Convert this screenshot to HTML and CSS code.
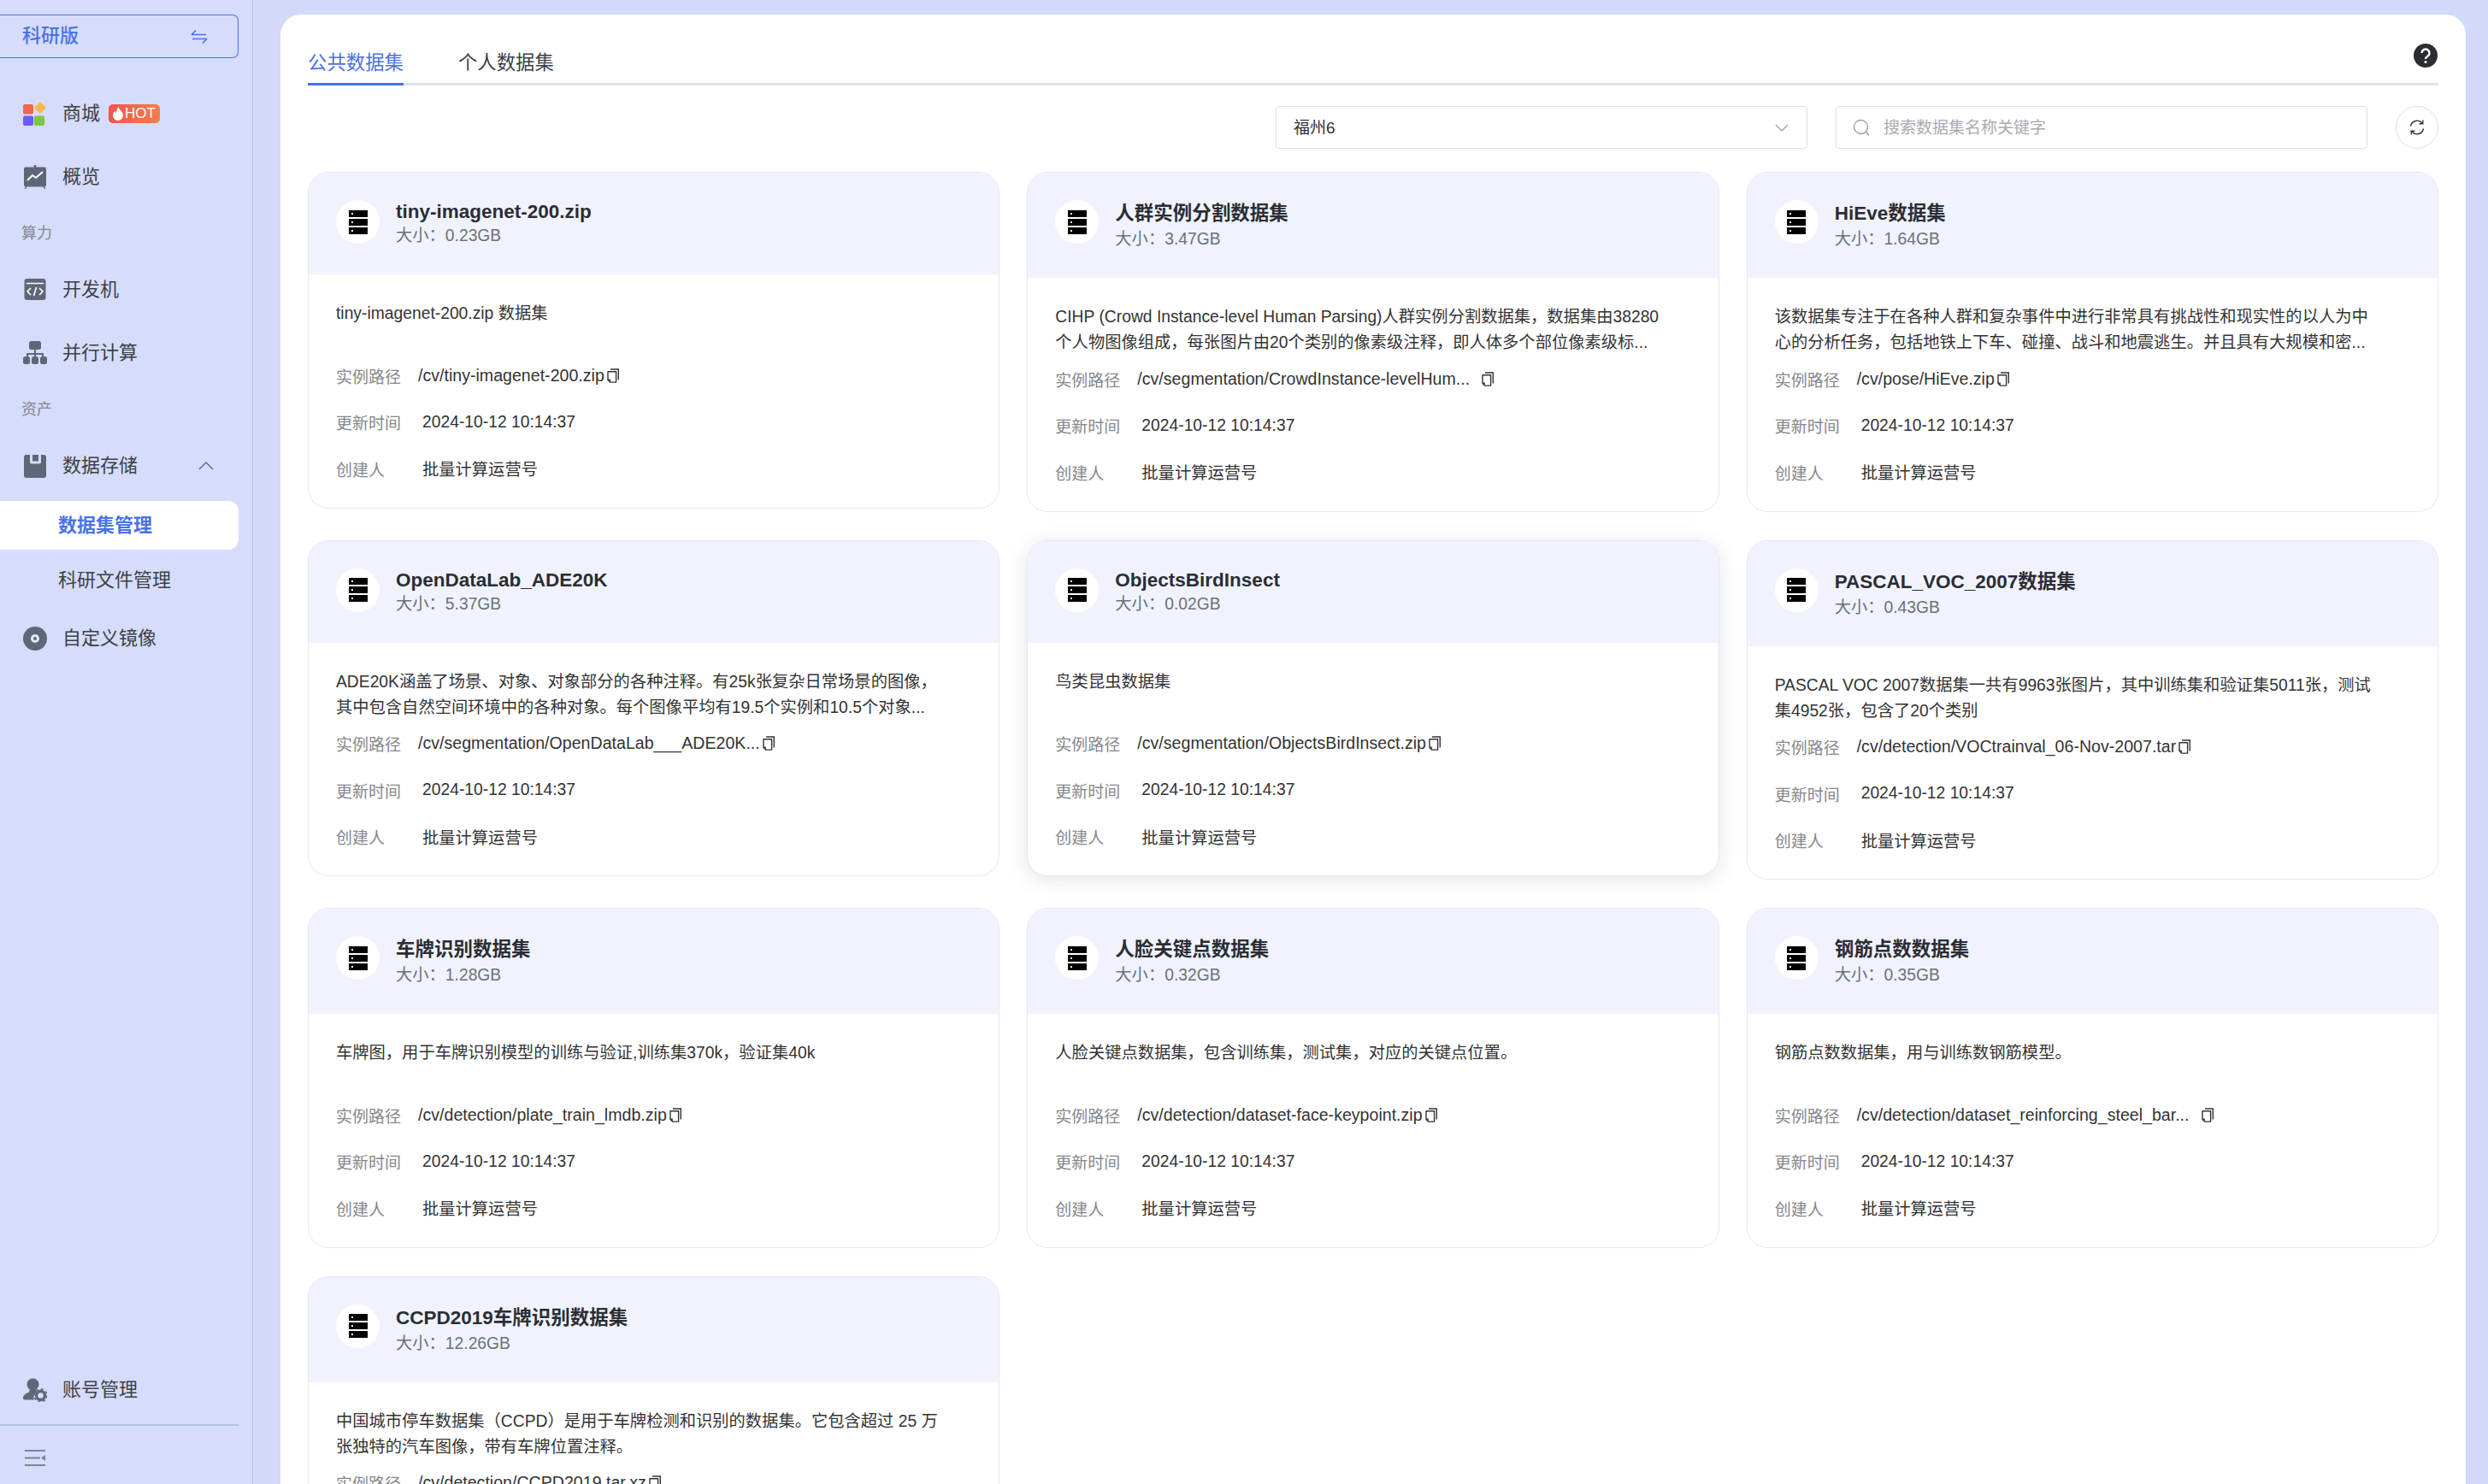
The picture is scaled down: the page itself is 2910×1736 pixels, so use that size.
FILE: index.html
```html
<!DOCTYPE html>
<html lang="zh-CN">
<head>
<meta charset="utf-8">
<title>数据集管理</title>
<link rel="stylesheet" href="styles.css">
</head>
<body>
<svg class="defs" width="0" height="0" aria-hidden="true">
  <symbol id="i-server" viewBox="0 0 22 28">
    <path fill-rule="evenodd" d="M0 0h22v8H0zM3 3v2h2V3zM0 10h22v8H0zM3 13v2h2v-2zM0 20h22v8H0zM3 23v2h2v-2z"/>
  </symbol>
  <symbol id="i-copy" viewBox="0 0 14 17">
    <path d="M4 1h9.300v12.500" fill="none" stroke="#333" stroke-width="1.400"/>
    <path d="M1 3.700h9.600v12.400H3.600L1 13.500z" fill="#fff" stroke="#333" stroke-width="1.400" stroke-linejoin="round"/>
    <path d="M1 12.600h2.800v3.200z" fill="#333"/>
  </symbol>
</svg>
<div class="app">
  <aside class="sidebar">
    <div class="edition"><span class="edition-name">科研版</span>
      <svg class="edition-icon" viewBox="0 0 20 18" width="20" height="18"><path d="M1 6.500h17M1 6.500L6 1.500M19 11.500H2M19 11.500l-5 5" fill="none" stroke="#4a72e8" stroke-width="1.600"/></svg>
    </div>
    <nav class="nav">
      <a class="nav-item">
        <svg class="nav-icon" viewBox="0 0 28 28" width="28" height="28"><rect x="0" y="3" width="12" height="11.500" rx="2" fill="#f2654f"/><rect x="15" y="2" width="10" height="10" rx="1.500" transform="rotate(45 20 7)" fill="#f7b948"/><rect x="0" y="16.500" width="12" height="11.500" rx="2" fill="#6a5cf6"/><rect x="13" y="16.500" width="12" height="11.500" rx="2" fill="#7ac83e"/></svg>
        <span>商城</span>
        <span class="hot"><svg viewBox="0 0 12 16" width="12" height="16"><path d="M6.500 0c.5 3 5.500 5.500 5.500 10a6 6 0 0 1-12 0c0-2.500 1.500-4 2.500-5 .2 1.200.7 2 1.500 2.500C4 5 5 2 6.500 0z" fill="#fff"/></svg>HOT</span>
      </a>
      <a class="nav-item">
        <svg class="nav-icon" viewBox="0 0 28 28" width="28" height="28"><path d="M3 2.500h22a2 2 0 0 1 2 2v19a2 2 0 0 1-2 2H3a2 2 0 0 1-2-2v-19a2 2 0 0 1 2-2z" fill="#5f6678"/><path d="M13.500 0h1v3h-1zM4 25l-1.500 3M24 25l1.500 3" stroke="#5f6678" stroke-width="1.500"/><path d="M5 18l6-6 4 3 8-7" fill="none" stroke="#fff" stroke-width="2"/></svg>
        <span>概览</span>
      </a>
      <div class="nav-group">算力</div>
      <a class="nav-item">
        <svg class="nav-icon" viewBox="0 0 28 28" width="28" height="28"><rect x="1.500" y="1" width="25" height="25" rx="3" fill="#5f6678"/><path d="M4 6.500h20" stroke="#fff" stroke-width="1.500"/><path d="M9 12l-4 4 4 4M19 12l4 4-4 4M15.500 11l-3 10" fill="none" stroke="#fff" stroke-width="1.700"/></svg>
        <span>开发机</span>
      </a>
      <a class="nav-item">
        <svg class="nav-icon" viewBox="0 0 28 28" width="28" height="28"><rect x="7" y="0" width="14" height="10" rx="2.500" fill="#5f6678"/><path d="M13 9h2v5h9v4h-2v-2h-7v2h-2v-2H6v2H4v-4h9z" fill="#5f6678"/><rect x="0" y="18" width="8" height="9" rx="2.500" fill="#5f6678"/><rect x="10" y="18" width="8" height="9" rx="2.500" fill="#5f6678"/><rect x="20" y="18" width="8" height="9" rx="2.500" fill="#5f6678"/></svg>
        <span>并行计算</span>
      </a>
      <div class="nav-group">资产</div>
      <a class="nav-item">
        <svg class="nav-icon" viewBox="0 0 28 28" width="28" height="28"><path fill-rule="evenodd" d="M4 1h4v8.500a2 2 0 0 0 2 2h9a2 2 0 0 0 2-2V1h3a3 3 0 0 1 3 3v21a3 3 0 0 1-3 3H4a3 3 0 0 1-3-3V4a3 3 0 0 1 3-3zM11 1h7v7.500h-7z" fill="#5f6678"/></svg>
        <span>数据存储</span>
        <svg class="nav-caret" viewBox="0 0 18 10" width="18" height="10"><path d="M1 9l8-8 8 8" fill="none" stroke="#666" stroke-width="1.300"/></svg>
      </a>
      <div class="subnav">
        <a class="sub-item sub-item--active">数据集管理</a>
        <a class="sub-item">科研文件管理</a>
      </div>
      <a class="nav-item">
        <svg class="nav-icon" viewBox="0 0 28 28" width="28" height="28"><circle cx="14" cy="14" r="14" fill="#5f6678"/><circle cx="14" cy="14" r="5" fill="#e3e6f7"/><circle cx="14" cy="14" r="2" fill="#5f6678"/></svg>
        <span>自定义镜像</span>
      </a>
    </nav>
    <div class="sidebar-foot">
      <a class="nav-item">
        <svg class="nav-icon" viewBox="0 0 28 28" width="28" height="28"><circle cx="11.500" cy="7.500" r="7" fill="#5f6678"/><path d="M8 13h7l1 3a8 8 0 0 0-3 9.500H2a2 2 0 0 1-2-2c0-4 4-5.500 7-7z" fill="#5f6678"/><circle cx="20.500" cy="20.500" r="5" fill="none" stroke="#5f6678" stroke-width="3.400"/><circle cx="20.500" cy="20.500" r="7.500" fill="none" stroke="#5f6678" stroke-width="1.500" stroke-dasharray="3 2.900"/></svg>
        <span>账号管理</span>
      </a>
      <div class="foot-rule"></div>
      <div class="collapse">
        <svg viewBox="0 0 25 19" width="25" height="19"><path d="M0 1h24M0 9.500h18M0 18h24" stroke="#7c8397" stroke-width="2.200"/><path d="M24 6v7l-5-3.500z" fill="#7c8397"/></svg>
      </div>
    </div>
  </aside>

  <main class="main">
    <div class="tabs">
      <a class="tab tab--active">公共数据集</a>
      <a class="tab">个人数据集</a>
      <svg class="help" viewBox="0 0 28 28" width="28" height="28"><circle cx="14" cy="14" r="14" fill="#2b2d33"/><path d="M9.500 11a4.500 4.500 0 1 1 6.800 3.900c-1.500.9-2.300 1.500-2.300 3.100" fill="none" stroke="#fff" stroke-width="2.400"/><circle cx="14" cy="21.500" r="1.600" fill="#fff"/></svg>
    </div>

    <div class="toolbar">
      <div class="field field--select"><span>福州6</span>
        <svg class="chevron" viewBox="0 0 16 9" width="16" height="9"><path d="M1 1l7 7 7-7" fill="none" stroke="#999" stroke-width="1.200"/></svg>
      </div>
      <div class="field field--search">
        <svg viewBox="0 0 20 20" width="20" height="20"><circle cx="9.500" cy="9.500" r="8" fill="none" stroke="#999" stroke-width="1.300"/><path d="M15 15l4 4" stroke="#999" stroke-width="1.300"/></svg>
        <span class="placeholder">搜索数据集名称关键字</span>
      </div>
      <button class="refresh" type="button" aria-label="刷新">
        <svg viewBox="0 0 20 20" width="20" height="20"><path d="M2.500 8.500A7.700 7.700 0 0 1 16 5M17.500 11.500A7.700 7.700 0 0 1 4 15" fill="none" stroke="#333" stroke-width="1.400"/><path d="M16.800 1.500v4.300h-4.300M3.200 18.500v-4.300h4.300" fill="none" stroke="#333" stroke-width="1.400"/></svg>
      </button>
    </div>

    <div class="grid">
      <article class="card card--latin">
        <header class="card-head">
          <span class="avatar"><svg width="22" height="28"><use href="#i-server"/></svg></span>
          <div class="card-title"><h3>tiny-imagenet-200.zip</h3><p>大小：0.23GB</p></div>
        </header>
        <div class="card-body">
          <p class="desc">tiny-imagenet-200.zip 数据集</p>
          <div class="row"><span class="label">实例路径</span><span class="path"><span class="path-text">/cv/tiny-imagenet-200.zip</span><svg class="copy" width="14" height="17"><use href="#i-copy"/></svg></span></div>
          <div class="row"><span class="label">更新时间</span><span class="value">2024-10-12 10:14:37</span></div>
          <div class="row"><span class="label">创建人</span><span class="value">批量计算运营号</span></div>
        </div>
      </article>

      <article class="card">
        <header class="card-head">
          <span class="avatar"><svg width="22" height="28"><use href="#i-server"/></svg></span>
          <div class="card-title"><h3>人群实例分割数据集</h3><p>大小：3.47GB</p></div>
        </header>
        <div class="card-body">
          <p class="desc">CIHP (Crowd Instance-level Human Parsing)人群实例分割数据集，数据集由38280<br>个人物图像组成，每张图片由20个类别的像素级注释，即人体多个部位像素级标...</p>
          <div class="row"><span class="label">实例路径</span><span class="path"><span class="path-text path-text--cut">/cv/segmentation/CrowdInstance-levelHum...</span><svg class="copy" width="14" height="17"><use href="#i-copy"/></svg></span></div>
          <div class="row"><span class="label">更新时间</span><span class="value">2024-10-12 10:14:37</span></div>
          <div class="row"><span class="label">创建人</span><span class="value">批量计算运营号</span></div>
        </div>
      </article>

      <article class="card">
        <header class="card-head">
          <span class="avatar"><svg width="22" height="28"><use href="#i-server"/></svg></span>
          <div class="card-title"><h3>HiEve数据集</h3><p>大小：1.64GB</p></div>
        </header>
        <div class="card-body">
          <p class="desc">该数据集专注于在各种人群和复杂事件中进行非常具有挑战性和现实性的以人为中<br>心的分析任务，包括地铁上下车、碰撞、战斗和地震逃生。并且具有大规模和密...</p>
          <div class="row"><span class="label">实例路径</span><span class="path"><span class="path-text">/cv/pose/HiEve.zip</span><svg class="copy" width="14" height="17"><use href="#i-copy"/></svg></span></div>
          <div class="row"><span class="label">更新时间</span><span class="value">2024-10-12 10:14:37</span></div>
          <div class="row"><span class="label">创建人</span><span class="value">批量计算运营号</span></div>
        </div>
      </article>

      <article class="card card--latin">
        <header class="card-head">
          <span class="avatar"><svg width="22" height="28"><use href="#i-server"/></svg></span>
          <div class="card-title"><h3>OpenDataLab_ADE20K</h3><p>大小：5.37GB</p></div>
        </header>
        <div class="card-body">
          <p class="desc">ADE20K涵盖了场景、对象、对象部分的各种注释。有25k张复杂日常场景的图像，<br>其中包含自然空间环境中的各种对象。每个图像平均有19.5个实例和10.5个对象...</p>
          <div class="row"><span class="label">实例路径</span><span class="path"><span class="path-text path-text--cut">/cv/segmentation/OpenDataLab___ADE20K...</span><svg class="copy" width="14" height="17"><use href="#i-copy"/></svg></span></div>
          <div class="row"><span class="label">更新时间</span><span class="value">2024-10-12 10:14:37</span></div>
          <div class="row"><span class="label">创建人</span><span class="value">批量计算运营号</span></div>
        </div>
      </article>

      <article class="card card--latin card--hover">
        <header class="card-head">
          <span class="avatar"><svg width="22" height="28"><use href="#i-server"/></svg></span>
          <div class="card-title"><h3>ObjectsBirdInsect</h3><p>大小：0.02GB</p></div>
        </header>
        <div class="card-body">
          <p class="desc">鸟类昆虫数据集</p>
          <div class="row"><span class="label">实例路径</span><span class="path"><span class="path-text">/cv/segmentation/ObjectsBirdInsect.zip</span><svg class="copy" width="14" height="17"><use href="#i-copy"/></svg></span></div>
          <div class="row"><span class="label">更新时间</span><span class="value">2024-10-12 10:14:37</span></div>
          <div class="row"><span class="label">创建人</span><span class="value">批量计算运营号</span></div>
        </div>
      </article>

      <article class="card">
        <header class="card-head">
          <span class="avatar"><svg width="22" height="28"><use href="#i-server"/></svg></span>
          <div class="card-title"><h3>PASCAL_VOC_2007数据集</h3><p>大小：0.43GB</p></div>
        </header>
        <div class="card-body">
          <p class="desc">PASCAL VOC 2007数据集一共有9963张图片，其中训练集和验证集5011张，测试<br>集4952张，包含了20个类别</p>
          <div class="row"><span class="label">实例路径</span><span class="path"><span class="path-text">/cv/detection/VOCtrainval_06-Nov-2007.tar</span><svg class="copy" width="14" height="17"><use href="#i-copy"/></svg></span></div>
          <div class="row"><span class="label">更新时间</span><span class="value">2024-10-12 10:14:37</span></div>
          <div class="row"><span class="label">创建人</span><span class="value">批量计算运营号</span></div>
        </div>
      </article>

      <article class="card">
        <header class="card-head">
          <span class="avatar"><svg width="22" height="28"><use href="#i-server"/></svg></span>
          <div class="card-title"><h3>车牌识别数据集</h3><p>大小：1.28GB</p></div>
        </header>
        <div class="card-body">
          <p class="desc">车牌图，用于车牌识别模型的训练与验证,训练集370k，验证集40k</p>
          <div class="row"><span class="label">实例路径</span><span class="path"><span class="path-text">/cv/detection/plate_train_lmdb.zip</span><svg class="copy" width="14" height="17"><use href="#i-copy"/></svg></span></div>
          <div class="row"><span class="label">更新时间</span><span class="value">2024-10-12 10:14:37</span></div>
          <div class="row"><span class="label">创建人</span><span class="value">批量计算运营号</span></div>
        </div>
      </article>

      <article class="card">
        <header class="card-head">
          <span class="avatar"><svg width="22" height="28"><use href="#i-server"/></svg></span>
          <div class="card-title"><h3>人脸关键点数据集</h3><p>大小：0.32GB</p></div>
        </header>
        <div class="card-body">
          <p class="desc">人脸关键点数据集，包含训练集，测试集，对应的关键点位置。</p>
          <div class="row"><span class="label">实例路径</span><span class="path"><span class="path-text">/cv/detection/dataset-face-keypoint.zip</span><svg class="copy" width="14" height="17"><use href="#i-copy"/></svg></span></div>
          <div class="row"><span class="label">更新时间</span><span class="value">2024-10-12 10:14:37</span></div>
          <div class="row"><span class="label">创建人</span><span class="value">批量计算运营号</span></div>
        </div>
      </article>

      <article class="card">
        <header class="card-head">
          <span class="avatar"><svg width="22" height="28"><use href="#i-server"/></svg></span>
          <div class="card-title"><h3>钢筋点数数据集</h3><p>大小：0.35GB</p></div>
        </header>
        <div class="card-body">
          <p class="desc">钢筋点数数据集，用与训练数钢筋模型。</p>
          <div class="row"><span class="label">实例路径</span><span class="path"><span class="path-text path-text--cut">/cv/detection/dataset_reinforcing_steel_bar...</span><svg class="copy" width="14" height="17"><use href="#i-copy"/></svg></span></div>
          <div class="row"><span class="label">更新时间</span><span class="value">2024-10-12 10:14:37</span></div>
          <div class="row"><span class="label">创建人</span><span class="value">批量计算运营号</span></div>
        </div>
      </article>

      <article class="card">
        <header class="card-head">
          <span class="avatar"><svg width="22" height="28"><use href="#i-server"/></svg></span>
          <div class="card-title"><h3>CCPD2019车牌识别数据集</h3><p>大小：12.26GB</p></div>
        </header>
        <div class="card-body">
          <p class="desc">中国城市停车数据集（CCPD）是用于车牌检测和识别的数据集。它包含超过 25 万<br>张独特的汽车图像，带有车牌位置注释。</p>
          <div class="row"><span class="label">实例路径</span><span class="path"><span class="path-text">/cv/detection/CCPD2019.tar.xz</span><svg class="copy" width="14" height="17"><use href="#i-copy"/></svg></span></div>
          <div class="row"><span class="label">更新时间</span><span class="value">2024-10-12 10:14:37</span></div>
          <div class="row"><span class="label">创建人</span><span class="value">批量计算运营号</span></div>
        </div>
      </article>
    </div>
  </main>
</div>
</body>
</html>
```

FILE: styles.css
```css
* { box-sizing: border-box; }
html, body { margin: 0; height: 100%; }
body {
  font-family: "Liberation Sans", "Noto Sans CJK SC", sans-serif;
  color: #333;
  background: #d2d9f9;
  overflow: hidden;
}
.defs { position: absolute; }
.app { display: flex; height: 1736px; overflow: hidden; }

/* Sidebar */
.sidebar {
  flex: 0 0 296px;
  display: flex;
  flex-direction: column;
  padding: 17px 16px 0 0;
  background: #d6dcfb;
  border-right: 1px solid #b9c6e6;
}
.edition {
  display: flex;
  align-items: center;
  justify-content: space-between;
  height: 51px;
  padding: 0 35px 0 26px;
  margin-bottom: 28px;
  border: 1px solid #4a72e8;
  border-left: 0;
  border-radius: 0 7px 7px 0;
  color: #4a72e8;
  font-size: 22px;
  font-weight: 500;
}
.edition-name { line-height: 30px; margin-top: -2px; }
.nav-item {
  display: flex;
  align-items: center;
  height: 74px;
  padding-left: 27px;
  font-size: 22px;
  line-height: 30px;
  color: #3d3f45;
}
.nav-icon { flex: none; margin-right: 18px; }
.nav-caret { margin-left: auto; margin-right: 29px; }
.hot {
  display: inline-flex;
  align-items: center;
  gap: 2px;
  height: 22px;
  margin-left: 10px;
  padding: 0 5px;
  border-radius: 5px;
  background: linear-gradient(90deg, #ee5650, #f08049);
  color: #fff;
  font-size: 17px;
  line-height: 22px;
}
.nav-group {
  height: 58px;
  padding-left: 25px;
  font-size: 18px;
  line-height: 58px;
  color: #85878f;
}
.subnav { display: flex; flex-direction: column; gap: 7px; margin: 4px 0 3px; }
.sub-item {
  height: 57px;
  padding-left: 68px;
  border-radius: 0 12px 12px 0;
  font-size: 22px;
  line-height: 57px;
  color: #3d3f45;
}
.sub-item--active { background: #fff; color: #4a72e8; font-weight: 700; }
.sidebar-foot { margin-top: auto; }
.foot-rule { height: 2px; margin-top: 3px; background: #b4c0e0; }
.collapse { display: flex; align-items: center; height: 68px; padding: 6px 0 0 29px; }

/* Main panel */
.main {
  flex: 1;
  min-width: 0;
  margin: 17px 26px 0 32px;
  padding: 0 32px;
  background: #fff;
  border-radius: 24px 24px 0 0;
  overflow: hidden;
}
.tabs {
  display: flex;
  gap: 64px;
  padding-top: 38px;
  border-bottom: 3px solid #e0e4ea;
}
.tab {
  position: relative;
  height: 42px;
  font-size: 22.4px;
  line-height: 38px;
  color: #3d3f45;
}
.tab--active { color: #4a72e8; }
.tab--active::after {
  content: "";
  position: absolute;
  left: 0;
  right: 0;
  bottom: -3px;
  height: 3px;
  background: #4a72e8;
}
.help { margin: -4px 1px 0 auto; }
.toolbar {
  display: flex;
  justify-content: flex-end;
  align-items: center;
  gap: 33px;
  margin: 24px 0 27px;
}
.field {
  display: flex;
  align-items: center;
  width: 622px;
  height: 50px;
  border: 1px solid #dcdfe6;
  border-radius: 4px;
  font-size: 19px;
}
.field span { line-height: 28px; margin-top: 2px; }
.field--select { justify-content: space-between; padding: 0 21px 0 20px; color: #333; }
.field--search { gap: 16px; padding-left: 19px; }
.placeholder { color: #a8abb2; }
.refresh {
  display: flex;
  align-items: center;
  justify-content: center;
  width: 50px;
  height: 50px;
  padding: 0;
  background: #fff;
  border: 1px solid #dcdfe6;
  border-radius: 50%;
}

/* Cards */
.grid {
  display: grid;
  grid-template-columns: repeat(3, 1fr);
  gap: 33px 32px;
  align-items: start;
}
.card {
  border: 1px solid #e5e8f2;
  border-radius: 24px;
  background: #fff;
  overflow: hidden;
}
.card--hover { box-shadow: 0 4px 24px rgba(60, 70, 110, .14); }
.card-head {
  display: flex;
  gap: 19px;
  height: 123px;
  padding: 32px 32px 0;
  background: #f0f3fe;
}
.card--latin .card-head { height: 119px; }
.avatar {
  display: flex;
  align-items: center;
  justify-content: center;
  flex: none;
  width: 51px;
  height: 51px;
  border-radius: 50%;
  background: #fff;
}
.card-title h3 {
  margin: 0;
  font-size: 22.5px;
  font-weight: 700;
  line-height: 32px;
  color: #2b2d33;
}
.card--latin .card-title h3 { line-height: 28px; }
.card-title p {
  margin: 0;
  font-size: 19.3px;
  line-height: 28px;
  color: #6e7076;
}
.card-body { padding: 31px 32px 18px; font-size: 19.3px; }
.desc {
  height: 60px;
  margin: 0;
  line-height: 30px;
  white-space: nowrap;
}
.row { display: flex; align-items: center; height: 54.5px; }
.label { flex: 0 0 101px; color: #85878d; font-size: 19px; }
.value { color: #333; }
.path { display: flex; align-items: center; margin-left: -5px; min-width: 0; }
.path-text { white-space: nowrap; font-size: 19.6px; }
.path-text--cut { width: 394px; margin-right: 6px; }
.copy { flex: none; margin-left: 3px; }
```
